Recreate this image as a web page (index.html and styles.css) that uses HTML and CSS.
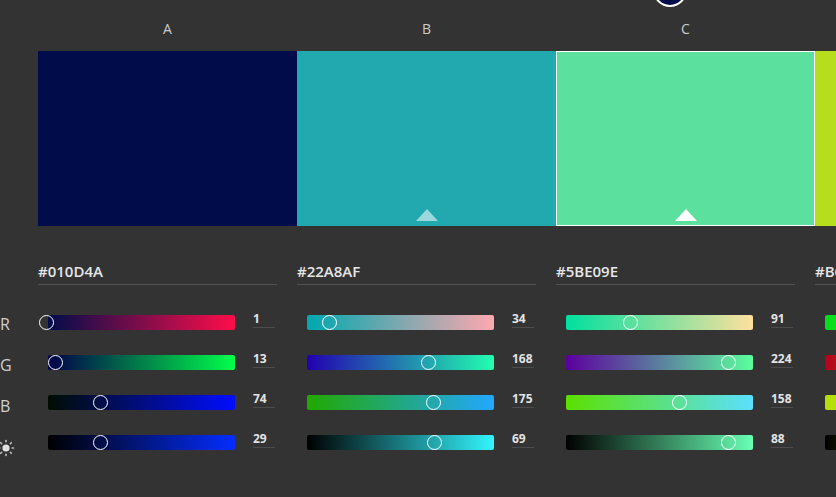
FILE: index.html
```html
<!DOCTYPE html>
<html>
<head>
<meta charset="utf-8">
<link rel="stylesheet" href="styles.css">
</head>
<body>
<div class="top-dot"></div>
<div class="page">
  <div class="labels">
    <div class="lbl">R</div>
    <div class="lbl">G</div>
    <div class="lbl">B</div>
    <div class="lbl sun">
      <svg width="14" height="18" viewBox="0 0 14 18">
        <circle cx="6" cy="9" r="3.6" fill="#e0e0e0"/>
        <g stroke="#bdbdbd" stroke-width="1.6" stroke-linecap="round">
          <line x1="6" y1="1.5" x2="6" y2="2.8"/>
          <line x1="6" y1="15.2" x2="6" y2="16.5"/>
          <line x1="12.2" y1="9" x2="13.5" y2="9"/>
          <line x1="-1.5" y1="9" x2="-0.2" y2="9"/>
          <line x1="10.4" y1="4.6" x2="11.3" y2="3.7"/>
          <line x1="10.4" y1="13.4" x2="11.3" y2="14.3"/>
          <line x1="1.6" y1="4.6" x2="0.7" y2="3.7"/>
          <line x1="1.6" y1="13.4" x2="0.7" y2="14.3"/>
        </g>
      </svg>
    </div>
  </div>
  <div class="columns">
    <div class="col">
      <div class="col-head">A</div>
      <div class="swatch" style="background:#010D4A"></div>
      <div class="col-body">
        <div class="hex">#010D4A</div>
        <div class="sliders">
          <div class="srow"><div class="track" style="background:linear-gradient(to right,rgb(0,13,74),rgb(255,13,74))"><span class="thumb" style="left:-8.8px"></span></div><div class="val">1</div></div>
          <div class="srow"><div class="track" style="background:linear-gradient(to right,rgb(1,0,74),rgb(1,255,74))"><span class="thumb" style="left:0px"></span></div><div class="val">13</div></div>
          <div class="srow"><div class="track" style="background:linear-gradient(to right,rgb(1,13,0),rgb(1,13,255))"><span class="thumb" style="left:44.8px"></span></div><div class="val">74</div></div>
          <div class="srow"><div class="track" style="background:linear-gradient(to right,#000,rgb(4,45,255))"><span class="thumb" style="left:44.7px"></span></div><div class="val">29</div></div>
        </div>
      </div>
    </div>
    <div class="col">
      <div class="col-head">B</div>
      <div class="swatch" style="background:#22A8AF"><span class="tri tri-dim"></span></div>
      <div class="col-body">
        <div class="hex">#22A8AF</div>
        <div class="sliders">
          <div class="srow"><div class="track" style="background:linear-gradient(to right,rgb(0,168,175),rgb(255,168,175))"><span class="thumb" style="left:15.4px"></span></div><div class="val">34</div></div>
          <div class="srow"><div class="track" style="background:linear-gradient(to right,rgb(34,0,175),rgb(34,255,175))"><span class="thumb" style="left:113.7px"></span></div><div class="val">168</div></div>
          <div class="srow"><div class="track" style="background:linear-gradient(to right,rgb(34,168,0),rgb(34,168,255))"><span class="thumb" style="left:118.8px"></span></div><div class="val">175</div></div>
          <div class="srow"><div class="track" style="background:linear-gradient(to right,#000,rgb(50,245,255))"><span class="thumb" style="left:119.5px"></span></div><div class="val">69</div></div>
        </div>
      </div>
    </div>
    <div class="col">
      <div class="col-head">C</div>
      <div class="swatch selected" style="background:#5BE09E"><span class="tri"></span></div>
      <div class="col-body">
        <div class="hex">#5BE09E</div>
        <div class="sliders">
          <div class="srow"><div class="track" style="background:linear-gradient(to right,rgb(0,224,158),rgb(255,224,158))"><span class="thumb" style="left:57.2px"></span></div><div class="val">91</div></div>
          <div class="srow"><div class="track" style="background:linear-gradient(to right,rgb(91,0,158),rgb(91,255,158))"><span class="thumb" style="left:154.8px"></span></div><div class="val">224</div></div>
          <div class="srow"><div class="track" style="background:linear-gradient(to right,rgb(91,224,0),rgb(91,224,255))"><span class="thumb" style="left:106.4px"></span></div><div class="val">158</div></div>
          <div class="srow"><div class="track" style="background:linear-gradient(to right,#000,rgb(104,255,180))"><span class="thumb" style="left:155.1px"></span></div><div class="val">88</div></div>
        </div>
      </div>
    </div>
    <div class="col">
      <div class="col-head">D</div>
      <div class="swatch" style="background:#B6DE1D"></div>
      <div class="col-body">
        <div class="hex">#B6DE1D</div>
        <div class="sliders">
          <div class="srow"><div class="track" style="background:linear-gradient(to right,rgb(0,222,29),rgb(255,222,29))"><span class="thumb" style="left:124px"></span></div><div class="val">182</div></div>
          <div class="srow"><div class="track" style="background:linear-gradient(to right,rgb(182,0,29),rgb(182,255,29))"><span class="thumb" style="left:153.3px"></span></div><div class="val">222</div></div>
          <div class="srow"><div class="track" style="background:linear-gradient(to right,rgb(182,222,0),rgb(182,222,255))"><span class="thumb" style="left:11.8px"></span></div><div class="val">29</div></div>
          <div class="srow"><div class="track" style="background:linear-gradient(to right,#000,rgb(209,255,33))"><span class="thumb" style="left:153.2px"></span></div><div class="val">87</div></div>
        </div>
      </div>
    </div>
  </div>
</div>
</body>
</html>
```
FILE: styles.css
```css
html, body {
  margin: 0;
  padding: 0;
  background: #333333;
  overflow: hidden;
  width: 836px;
  height: 497px;
  font-family: "Open Sans", "Noto Sans", "Liberation Sans", sans-serif;
}

.top-dot {
  position: absolute;
  left: 653px;
  top: -27px;
  width: 34px;
  height: 34px;
  box-sizing: border-box;
  border: 2px solid #ffffff;
  border-radius: 50%;
  background: #010D4A;
}

.page {
  display: flex;
  align-items: flex-start;
}

.labels {
  width: 38px;
  flex-shrink: 0;
  padding-top: 304px;
}

.lbl {
  height: 41px;
  line-height: 41px;
  font-size: 16px;
  color: #cfcfcf;
  padding-left: 0;
}

.lbl.sun {
  display: flex;
  align-items: center;
}

.lbl.sun svg {
  display: block;
  overflow: visible;
}

.columns {
  display: flex;
}

.col {
  width: 259px;
  flex-shrink: 0;
}

.col-head {
  height: 51px;
  box-sizing: border-box;
  padding-top: 19px;
  line-height: 20px;
  font-size: 14px;
  color: #cccccc;
  text-align: center;
}

.swatch {
  position: relative;
  height: 175px;
}

.swatch.selected {
  box-shadow: inset 0 0 0 1px #ffffff;
}

.tri {
  position: absolute;
  left: 50%;
  bottom: 5px;
  margin-left: -11px;
  width: 0;
  height: 0;
  border-left: 11px solid transparent;
  border-right: 11px solid transparent;
  border-bottom: 12px solid #ffffff;
}

.tri.tri-dim {
  border-bottom-color: rgba(255, 255, 255, 0.55);
}

.col-body {
  padding-right: 20px;
}

.hex {
  margin-top: 35px;
  font-size: 15px;
  line-height: 20px;
  font-weight: 600;
  color: #e6e6e6;
  padding-bottom: 3px;
  border-bottom: 1px solid #525252;
}

.sliders {
  margin-top: 18px;
}

.srow {
  display: flex;
  align-items: flex-start;
  height: 40px;
}

.track {
  position: relative;
  margin-left: 10px;
  margin-top: 12px;
  width: 187px;
  height: 15px;
  border-radius: 2px;
}

.thumb {
  position: absolute;
  top: 0;
  width: 15px;
  height: 15px;
  box-sizing: border-box;
  border: 1.5px solid #ffffff;
  border-radius: 50%;
}

.val {
  margin-left: 18px;
  margin-top: 8px;
  width: 22px;
  font-size: 12px;
  line-height: 15px;
  font-weight: 700;
  color: #e3e3e3;
  padding-bottom: 1px;
  border-bottom: 1px solid #4c4c4c;
}
```
